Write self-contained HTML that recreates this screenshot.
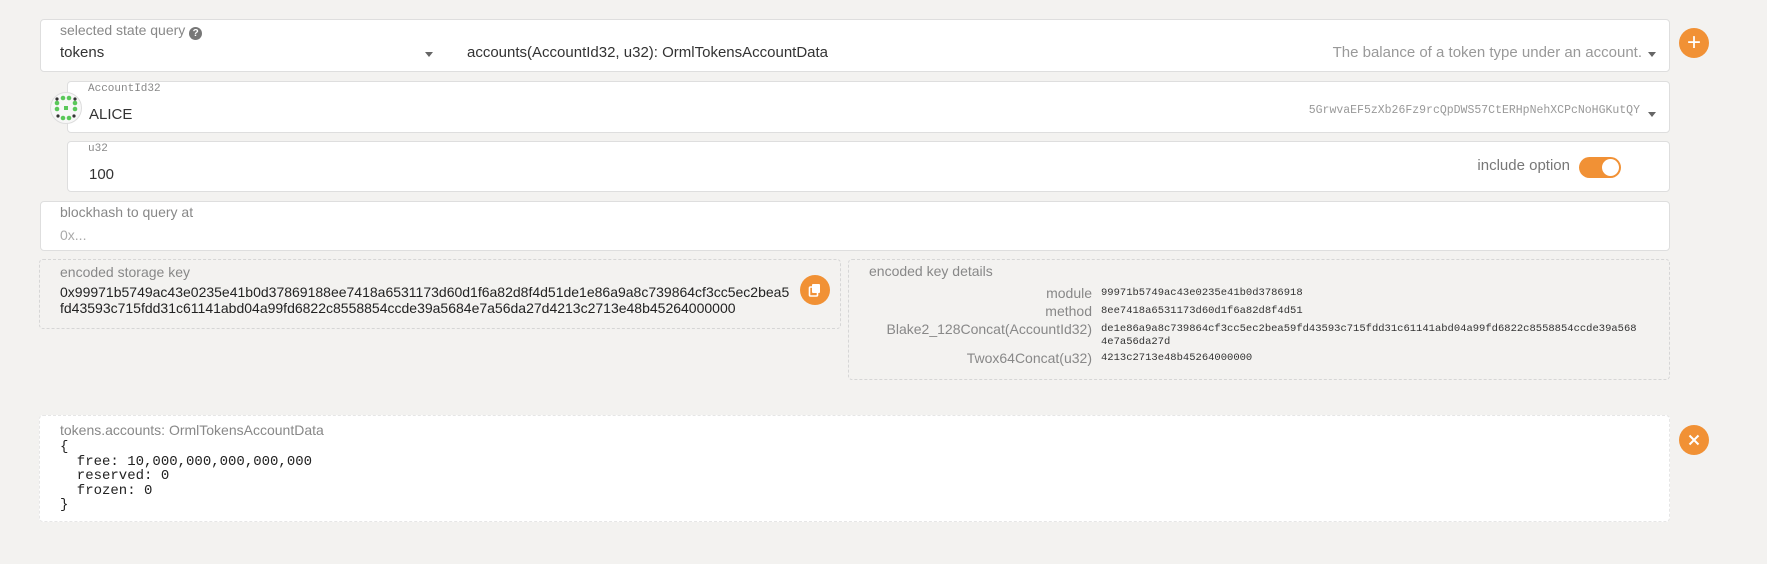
<!DOCTYPE html>
<html><head><meta charset="utf-8"><style>
*{box-sizing:border-box;margin:0;padding:0}
body{width:1767px;height:564px;background:#f3f2f0;font-family:"Liberation Sans",sans-serif;position:relative;overflow:hidden;color:#333}
.box{position:absolute;background:#fff;border:1px solid #dedede;border-radius:4px}
.t{position:absolute;white-space:nowrap}
.lbl{color:#888;font-size:14px}
.mono{font-family:"Liberation Mono",monospace}
.arrow{position:absolute;width:0;height:0;border-left:4px solid transparent;border-right:4px solid transparent;border-top:5px solid #666}
.btn{position:absolute;width:30px;height:30px;border-radius:50%;background:#f19135;color:#fff;text-align:center}
.dash{position:absolute;border:1px dashed #d6d6d6;border-radius:4px}
</style></head><body>
<div class="box" style="left:40px;top:19px;width:1630px;height:53px"></div>
<div class="t lbl" style="left:60px;top:22px">selected state query <span style="display:inline-block;width:13px;height:13px;border-radius:50%;background:#777;color:#fff;font-size:10px;text-align:center;line-height:13px;font-weight:bold;vertical-align:-1px">?</span></div>
<div class="t" style="left:60px;top:44px;font-size:15px">tokens</div>
<div class="arrow" style="left:425px;top:52px"></div>
<div class="t" style="left:467px;top:44px;font-size:15px">accounts(AccountId32, u32): OrmlTokensAccountData</div>
<div class="t" style="right:125px;top:44px;font-size:15px;color:#999">The balance of a token type under an account.</div>
<div class="arrow" style="left:1648px;top:52px"></div>
<div class="btn" style="left:1679px;top:28px;font-size:24px;line-height:29px">+</div>

<div class="box" style="left:67px;top:81px;width:1603px;height:52px"></div>
<svg style="position:absolute;left:50px;top:92px" width="32" height="32" viewBox="0 0 32 32"><circle cx="16" cy="16" r="15.5" fill="#f7f7f7" stroke="#ddd"/>
<g fill="#5ac85a"><circle cx="13" cy="6" r="2.3"/><circle cx="19" cy="6" r="2.3"/><circle cx="13" cy="26" r="2.3"/><circle cx="19" cy="26" r="2.3"/><circle cx="7" cy="11" r="2.3"/><circle cx="7" cy="17" r="2.3"/><circle cx="25" cy="11" r="2.3"/><circle cx="25" cy="17" r="2.3"/><rect x="14" y="14" width="4" height="4"/></g>
<g fill="#333"><circle cx="7" cy="7" r="1.6"/><circle cx="25" cy="7" r="1.6"/><circle cx="8" cy="24" r="1.6"/><circle cx="24" cy="24" r="1.6"/></g></svg>
<div class="t mono" style="left:88px;top:83px;font-size:11px;color:#888">AccountId32</div>
<div class="t" style="left:89px;top:106px;font-size:15px">ALICE</div>
<div class="t mono" style="right:127px;top:104px;font-size:11.5px;color:#999">5GrwvaEF5zXb26Fz9rcQpDWS57CtERHpNehXCPcNoHGKutQY</div>
<div class="arrow" style="left:1648px;top:112px"></div>

<div class="box" style="left:67px;top:141px;width:1603px;height:51px"></div>
<div class="t mono" style="left:88px;top:143px;font-size:11px;color:#888">u32</div>
<div class="t" style="left:89px;top:166px;font-size:15px">100</div>
<div class="t" style="right:197px;top:157px;font-size:15px;color:#777">include option</div>
<div style="position:absolute;left:1579px;top:157px;width:42px;height:21px;border-radius:11px;background:#f19135"><div style="position:absolute;right:2px;top:2px;width:17px;height:17px;border-radius:50%;background:#fff"></div></div>

<div class="box" style="left:40px;top:201px;width:1630px;height:50px"></div>
<div class="t lbl" style="left:60px;top:204px">blockhash to query at</div>
<div class="t" style="left:60px;top:227px;font-size:14px;color:#aaa">0x...</div>

<div class="dash" style="left:39px;top:259px;width:802px;height:70px"></div>
<div class="t lbl" style="left:60px;top:264px">encoded storage key</div>
<div class="t" style="left:60px;top:284px;font-size:14px;line-height:16px;color:#222">0x99971b5749ac43e0235e41b0d37869188ee7418a6531173d60d1f6a82d8f4d51de1e86a9a8c739864cf3cc5ec2bea5<br>fd43593c715fdd31c61141abd04a99fd6822c8558854ccde39a5684e7a56da27d4213c2713e48b45264000000</div>
<div class="btn" style="left:800px;top:275px"><svg width="30" height="30" viewBox="0 0 30 30"><rect x="12" y="9" width="8" height="9" rx="1" fill="#fff"/><rect x="9.5" y="12" width="8" height="9" rx="1" fill="none" stroke="#fff" stroke-width="1.6"/></svg></div>

<div class="dash" style="left:848px;top:259px;width:822px;height:121px"></div>
<div class="t lbl" style="left:869px;top:263px;font-size:14px">encoded key details</div>
<div class="t" style="right:675px;top:285px;font-size:14px;color:#888">module</div>
<div class="t mono" style="left:1101px;top:287px;font-size:10.5px">99971b5749ac43e0235e41b0d3786918</div>
<div class="t" style="right:675px;top:303px;font-size:14px;color:#888">method</div>
<div class="t mono" style="left:1101px;top:305px;font-size:10.5px">8ee7418a6531173d60d1f6a82d8f4d51</div>
<div class="t" style="right:675px;top:321px;font-size:14px;color:#888">Blake2_128Concat(AccountId32)</div>
<div class="t mono" style="left:1101px;top:323px;font-size:10.5px;line-height:13px">de1e86a9a8c739864cf3cc5ec2bea59fd43593c715fdd31c61141abd04a99fd6822c8558854ccde39a568<br>4e7a56da27d</div>
<div class="t" style="right:675px;top:350px;font-size:14px;color:#888">Twox64Concat(u32)</div>
<div class="t mono" style="left:1101px;top:352px;font-size:10.5px">4213c2713e48b45264000000</div>

<div class="box" style="left:39px;top:415px;width:1631px;height:107px;border:1px dashed #e6e6e6"></div>
<div class="t lbl" style="left:60px;top:422px">tokens.accounts: OrmlTokensAccountData</div>
<pre class="t mono" style="left:60px;top:440px;font-size:14px;line-height:14.5px;color:#222;white-space:pre">{
  free: 10,000,000,000,000,000
  reserved: 0
  frozen: 0
}</pre>
<div class="btn" style="left:1679px;top:425px"><svg width="30" height="30" viewBox="0 0 30 30"><path d="M10.5 10.5l9 9M19.5 10.5l-9 9" stroke="#fff" stroke-width="2"/></svg></div>
</body></html>
